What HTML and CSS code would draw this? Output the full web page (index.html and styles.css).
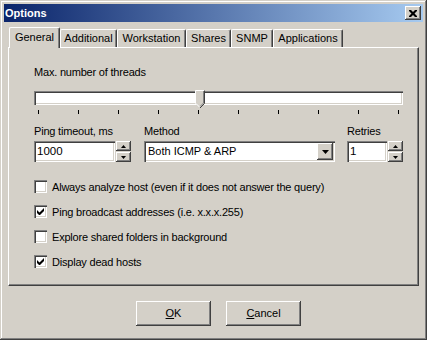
FILE: index.html
```html
<!DOCTYPE html>
<html>
<head>
<meta charset="utf-8">
<link rel="stylesheet" href="styles.css">
</head>
<body>
<div class="window">
  <div class="titlebar">
    <span class="title">Options</span>
    <span class="close"><svg width="8" height="7" viewBox="0 0 8 7"><path d="M0 0h2l2 2 2-2h2v1l-2.5 2.5L8 6v1H6L4 5 2 7H0V6l2.5-2.5L0 1z" fill="#000"/></svg></span>
  </div>
  <div class="frame">
    <div class="tabs">
      <div class="tab sel w-gen">General</div>
      <div class="tab w-add">Additional</div>
      <div class="tab w-ws">Workstation</div>
      <div class="tab w-sh">Shares</div>
      <div class="tab w-snmp">SNMP</div>
      <div class="tab w-app">Applications</div>
    </div>
    <div class="panel">
      <div class="label">Max. number of threads</div>
      <div class="slider">
        <div class="track"></div>
        <svg class="thumb" width="11" height="19" viewBox="0 0 11 19">
          <polygon points="0.5,0.5 9.5,0.5 9.5,13.5 5,18 0.5,13.5" fill="#D4D0C8"/>
          <polyline points="0.5,13.5 0.5,0.5 9.5,0.5" fill="none" stroke="#fff"/>
          <polyline points="9.5,0.5 9.5,13.5 5,18" fill="none" stroke="#404040"/>
          <polyline points="8.5,1 8.5,13 5,16.5" fill="none" stroke="#808080"/>
          <polyline points="1,13.5 4.5,17" fill="none" stroke="#fff"/>
        </svg>
        <div class="ticks">
          <i></i><i></i><i></i><i></i><i></i><i></i><i></i><i></i><i></i><i></i>
        </div>
      </div>
      <div class="row">
        <div class="field f-ping">
          <div class="label">Ping timeout, ms</div>
          <div class="spinbox">
            <div class="edit e-ping">1000</div>
            <div class="spin">
              <div class="sbtn"><svg width="5" height="3" viewBox="0 0 5 3"><path d="M2.5 0L5 3H0z" fill="#000"/></svg></div>
              <div class="sbtn"><svg width="5" height="3" viewBox="0 0 5 3"><path d="M0 0h5L2.5 3z" fill="#000"/></svg></div>
            </div>
          </div>
        </div>
        <div class="field f-method">
          <div class="label">Method</div>
          <div class="combo">
            <span class="ctext">Both ICMP &amp; ARP</span>
            <span class="dbtn"><svg width="7" height="4" viewBox="0 0 7 4"><path d="M0 0h7L3.5 4z" fill="#000"/></svg></span>
          </div>
        </div>
        <div class="field f-retries">
          <div class="label">Retries</div>
          <div class="spinbox">
            <div class="edit e-ret">1</div>
            <div class="spin">
              <div class="sbtn"><svg width="5" height="3" viewBox="0 0 5 3"><path d="M2.5 0L5 3H0z" fill="#000"/></svg></div>
              <div class="sbtn"><svg width="5" height="3" viewBox="0 0 5 3"><path d="M0 0h5L2.5 3z" fill="#000"/></svg></div>
            </div>
          </div>
        </div>
      </div>
      <div class="checks">
        <div class="check"><span class="box"></span><span>Always analyze host (even if it does not answer the query)</span></div>
        <div class="check"><span class="box"><svg width="7" height="7" viewBox="0 0 7 7"><path d="M0 2v3l2 2h1l4-4V0L2.5 4.5z" fill="#000"/></svg></span><span>Ping broadcast addresses (i.e. x.x.x.255)</span></div>
        <div class="check"><span class="box"></span><span>Explore shared folders in background</span></div>
        <div class="check"><span class="box"><svg width="7" height="7" viewBox="0 0 7 7"><path d="M0 2v3l2 2h1l4-4V0L2.5 4.5z" fill="#000"/></svg></span><span>Display dead hosts</span></div>
      </div>
    </div>
    <div class="buttons">
      <div class="btn"><span class="u">O</span>K</div>
      <div class="btn"><span class="u">C</span>ancel</div>
    </div>
  </div>
</div>
</body>
</html>
```
FILE: styles.css
```css
html, body {
  margin: 0;
  padding: 0;
  background: #D4D0C8;
}
body {
  font-family: "Liberation Sans", Arial, sans-serif;
  font-size: 11px;
  letter-spacing: -0.2px;
  color: #000;
}
.window {
  width: 427px;
  height: 340px;
  box-sizing: border-box;
  padding: 4px;
  background: #D4D0C8;
  box-shadow: inset -1px -1px #404040, inset 1px 1px #D4D0C8, inset -2px -2px #808080, inset 2px 2px #fff;
  display: flex;
  flex-direction: column;
}
.titlebar {
  height: 18px;
  background: linear-gradient(to right, #0A246A, #A6CAF0);
  display: flex;
  align-items: center;
  justify-content: space-between;
  padding-left: 1px;
  padding-right: 2px;
}
.title {
  color: #fff;
  font-weight: bold;
  font-size: 11px;
  line-height: 13px;
  letter-spacing: 0;
}
.close {
  width: 16px;
  height: 14px;
  box-sizing: border-box;
  background: #D4D0C8;
  box-shadow: inset -1px -1px #404040, inset 1px 1px #fff, inset -2px -2px #808080;
  display: flex;
  align-items: center;
  justify-content: center;
  padding-right: 1px;
}
.close svg { display: block; }
.frame {
  flex: 1;
  display: flex;
  flex-direction: column;
  padding: 5px 4px 0 4px;
}
.tabs {
  display: flex;
  align-items: flex-end;
  height: 20px;
  padding-left: 1px;
  position: relative;
  z-index: 1;
}
.tab {
  height: 18px;
  box-sizing: border-box;
  border-top: 1px solid #fff;
  border-left: 1px solid #fff;
  border-right: 1px solid #404040;
  box-shadow: inset -1px 0 #808080;
  border-radius: 2px 2px 0 0;
  text-align: center;
  line-height: 17px;
  background: #D4D0C8;
  letter-spacing: 0;
}
.tab.sel {
  height: 21px;
  margin-bottom: -1px;
  line-height: 18px;
}
.w-gen { width: 51px; }
.w-add { width: 57px; }
.w-ws { width: 69px; }
.w-sh { width: 45px; }
.w-snmp { width: 42px; }
.w-app { width: 70px; }
.panel {
  height: 239px;
  box-sizing: border-box;
  border-top: 1px solid #fff;
  border-left: 1px solid #fff;
  border-right: 1px solid #404040;
  border-bottom: 1px solid #404040;
  box-shadow: inset -1px -1px #808080;
  padding: 18px 0 0 25px;
}
.label {
  line-height: 13px;
  height: 13px;
}
.slider {
  position: relative;
  width: 369px;
  margin-top: 12px;
}
.track {
  height: 14px;
  box-sizing: border-box;
  background: #fff;
  box-shadow: inset 1px 1px #808080, inset 2px 2px #404040, inset -1px -1px #fff, inset -2px -2px #D4D0C8;
}
.thumb {
  position: absolute;
  left: 161px;
  top: -1px;
  display: block;
}
.ticks {
  display: flex;
  justify-content: space-between;
  padding: 0 4px;
  margin-top: 5px;
  height: 4px;
}
.ticks i {
  width: 1px;
  height: 4px;
  background: #000;
}
.row {
  display: flex;
  margin-top: 11px;
}
.field .label { margin-bottom: 3px; }
.f-ping { width: 110px; }
.f-method { width: 203px; }
.spinbox {
  display: flex;
  align-items: flex-start;
}
.edit {
  height: 21px;
  box-sizing: border-box;
  background: #fff;
  box-shadow: inset 1px 1px #808080, inset 2px 2px #404040, inset -1px -1px #fff, inset -2px -2px #D4D0C8;
  line-height: 20px;
  padding-left: 3px;
  font-size: 11.5px;
  letter-spacing: 0;
}
.e-ping { width: 81px; }
.e-ret { width: 40px; }
.spin {
  width: 15px;
  margin-left: 1px;
  display: flex;
  flex-direction: column;
}
.sbtn {
  height: 10px;
  box-sizing: border-box;
  background: #D4D0C8;
  box-shadow: inset -1px -1px #404040, inset 1px 1px #fff, inset -2px -2px #808080;
  display: flex;
  align-items: center;
  justify-content: center;
  margin-bottom: 1px;
}
.sbtn svg { display: block; }
.combo {
  width: 191px;
  height: 21px;
  box-sizing: border-box;
  background: #fff;
  box-shadow: inset 1px 1px #808080, inset 2px 2px #404040, inset -1px -1px #fff, inset -2px -2px #D4D0C8;
  display: flex;
  align-items: center;
  justify-content: space-between;
  padding: 2px 2px 2px 4px;
}
.ctext {
  font-size: 11px;
  line-height: 17px;
  letter-spacing: 0;
}
.dbtn {
  width: 16px;
  height: 17px;
  box-sizing: border-box;
  background: #D4D0C8;
  box-shadow: inset -1px -1px #404040, inset 1px 1px #fff, inset -2px -2px #808080;
  display: flex;
  align-items: center;
  justify-content: center;
}
.dbtn svg { display: block; }
.checks {
  margin-top: 17px;
  display: flex;
  flex-direction: column;
  gap: 12px;
}
.check {
  display: flex;
  align-items: center;
  height: 13px;
  gap: 5px;
}
.box {
  width: 13px;
  height: 13px;
  box-sizing: border-box;
  background: #fff;
  box-shadow: inset 1px 1px #808080, inset 2px 2px #404040, inset -1px -1px #fff, inset -2px -2px #D4D0C8;
  display: flex;
  align-items: center;
  justify-content: center;
  flex: none;
}
.box svg { display: block; }
.buttons {
  display: flex;
  justify-content: center;
  gap: 15px;
  margin-top: 15px;
  padding-left: 10px;
}
.btn {
  width: 75px;
  height: 25px;
  box-sizing: border-box;
  background: #D4D0C8;
  box-shadow: inset -1px -1px #404040, inset 1px 1px #fff, inset -2px -2px #808080;
  text-align: center;
  line-height: 24px;
  letter-spacing: 0;
}
.u { text-decoration: underline; }
```
